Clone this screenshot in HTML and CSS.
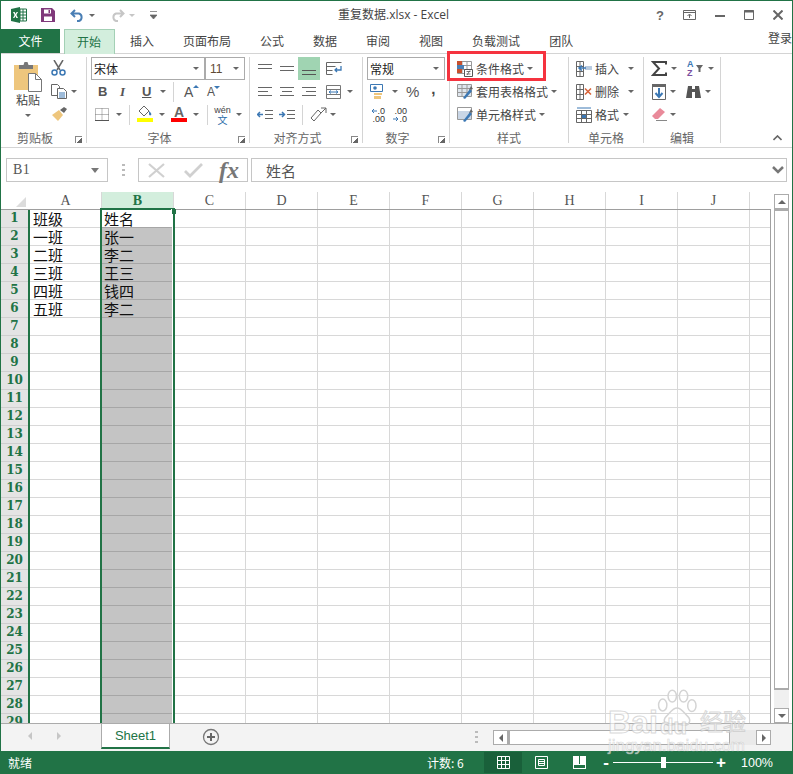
FILE: index.html
```html
<!DOCTYPE html>
<html lang="zh-CN">
<head>
    <meta charset="UTF-8">
    <meta name="viewport" content="width=device-width, initial-scale=1.0">
    <title>重复数据.xlsx - Excel</title>
    <link rel="stylesheet" href="styles.css">
</head>
<body>
<div class="window">

    <!-- Title bar -->
    <div class="titlebar">
        <div class="qat">
            <svg width="16" height="16" viewBox="0 0 16 16"><path d="M0 2 9 0v16L0 14z" fill="#217346"/><path d="M9 2h6.500v12H9z" fill="#fff" stroke="#217346"/><path d="M9 5h7M9 8h7M9 11h7M12 2v12" stroke="#217346"/><path d="M2 5h1.600l1 2 1-2H7L5.400 8 7 11H5.400l-1-2-1 2H2l1.600-3z" fill="#fff"/></svg>
            <svg class="ml14" width="14" height="14" viewBox="0 0 14 14"><path d="M0 0h11l3 3v11H0z" fill="#80397b"/><path d="M3 1.500h7v4H3z" fill="#fff"/><path d="M3 8.500h8V13H3z" fill="#fff"/><path d="M7.500 2h1.500v3H7.500z" fill="#80397b"/></svg>
            <svg class="ml15" width="15" height="13" viewBox="0 0 15 13"><path d="M5 1 1.500 4.500 5 8M2 4.500h7a4 4 0 0 1 0 7.500H7" fill="none" stroke="#4a7fb5" stroke-width="2"/></svg>
            <span class="dd ml4"></span>
            <svg class="ml14" width="15" height="13" viewBox="0 0 15 13"><path d="M10 1l3.500 3.500L10 8M13 4.500H6a4 4 0 0 0 0 7.500h2" fill="none" stroke="#c6c6c6" stroke-width="2"/></svg>
            <span class="dd dd-light ml4"></span>
            <svg class="ml14" width="7" height="9" viewBox="0 0 7 9"><path d="M0 .5h7M0 4h7l-3.500 4z" fill="#666" stroke="#666" stroke-width=".7"/></svg>
        </div>
        <div class="doc-title">重复数据.xlsx - Excel</div>
        <div class="win-btns">
            <span class="help">?</span>
            <svg width="13" height="10" viewBox="0 0 13 10"><path d="M.5.500h12v9H.5z" fill="none" stroke="#666"/><path d="M1 2.500h11" stroke="#666"/><path d="M6.500 8V4.500M4.500 6l2-2 2 2" fill="none" stroke="#666"/></svg>
            <svg width="10" height="10" viewBox="0 0 10 10"><path d="M0 6h10" stroke="#666" stroke-width="2"/></svg>
            <svg width="10" height="10" viewBox="0 0 10 10"><path d="M.5.500h9v9h-9z" fill="none" stroke="#666"/><path d="M0 1.500h10" stroke="#666" stroke-width="2"/></svg>
            <svg width="10" height="10" viewBox="0 0 10 10"><path d="M.5.500l9 9M9.500.500l-9 9" stroke="#666" stroke-width="2"/></svg>
        </div>
    </div>

    <!-- Tabs -->
    <div class="tabs">
        <div class="tab-file">文件</div>
        <div class="tab active">开始</div>
        <div class="tab">插入</div>
        <div class="tab">页面布局</div>
        <div class="tab">公式</div>
        <div class="tab">数据</div>
        <div class="tab">审阅</div>
        <div class="tab">视图</div>
        <div class="tab">负载测试</div>
        <div class="tab">团队</div>
        <div class="login">登录</div>
    </div>

    <!-- Ribbon -->
    <div class="ribbon">
        <div class="group g-clip">
            <div class="clip-body">
                <div class="paste">
                    <svg width="28" height="30" viewBox="0 0 28 30"><path d="M0 3h24v25H0z" fill="#eec67d"/><path d="M5 3h4.500l1-3h3l1 3H19v4H5z" fill="#777"/><path d="M14.500 11.500h7l6 6v12h-13z" fill="#fff" stroke="#777"/><path d="M21.500 11.500v6h6" fill="none" stroke="#777"/></svg>
                    <span class="paste-label">粘贴</span>
                    <span class="dd"></span>
                </div>
                <div class="clip-tools">
                    <svg width="15" height="16" viewBox="0 0 15 16"><path d="M3 0l6 10M12 0 6 10" stroke="#666" stroke-width="1.500"/><circle cx="3.500" cy="12.500" r="2.500" fill="none" stroke="#3c78b4" stroke-width="1.500"/><circle cx="11.500" cy="12.500" r="2.500" fill="none" stroke="#3c78b4" stroke-width="1.500"/></svg>
                    <div class="tool-row">
                        <svg width="16" height="15" viewBox="0 0 16 15"><path d="M.5.500h6l2 2v9h-8z" fill="#fff" stroke="#666"/><path d="M6.500 4.500h6l3 3v7h-9z" fill="#fff" stroke="#666"/><path d="M8 9h6M8 11h6M8 13h6" stroke="#3c78b4"/></svg>
                        <span class="dd"></span>
                    </div>
                    <svg width="16" height="14" viewBox="0 0 16 14"><path d="M9 3l4-3 3 2-3 4z" fill="#666"/><path d="M1 8l7-5 4 5-5 6z" fill="#eec67d"/></svg>
                </div>
            </div>
            <div class="g-label has-launch">剪贴板<i class="launch"></i></div>
        </div>

        <div class="group g-font">
            <div class="rows">
                <div class="row">
                    <div class="combo font-name"><span>宋体</span><span class="dd"></span></div>
                    <div class="combo font-size"><span class="orange">11</span><span class="dd"></span></div>
                </div>
                <div class="row row-f2">
                    <span class="fmt b">B</span>
                    <span class="fmt i">I</span>
                    <span class="fmt u">U</span>
                    <span class="dd ml3"></span>
                    <span class="vsep ml6"></span>
                    <span class="grow ml10">A<i class="up"></i></span>
                    <span class="shrink">A<i class="down"></i></span>
                </div>
                <div class="row row-f3">
                    <svg width="14" height="13" viewBox="0 0 14 13"><path d="M.5.500h13v12H.5zM7 .5v12M.5 6.500h13" fill="none" stroke="#777" stroke-dasharray="1 1"/><path d="M0 12.500h14" stroke="#555"/></svg>
                    <span class="dd ml7"></span>
                    <span class="vsep ml6"></span>
                    <span class="color-btn ml7">
                        <svg width="16" height="12" viewBox="0 0 16 12"><path d="M2 6l5-5 5 5-5 5z" fill="#fff" stroke="#666"/><path d="M12 6c2 2 3 3 2 4s-2 0-2-1z" fill="#3c78b4"/></svg>
                        <i class="bar yellow"></i>
                    </span>
                    <span class="dd ml6"></span>
                    <span class="color-btn fc ml5">A<i class="bar red"></i></span>
                    <span class="dd ml6"></span>
                    <span class="vsep ml7"></span>
                    <span class="wen ml7"><em>wén</em><b>文</b></span>
                    <span class="dd ml6"></span>
                </div>
            </div>
            <div class="g-label has-launch">字体<i class="launch"></i></div>
        </div>

        <div class="group g-align">
            <div class="rows">
                <div class="row">
                    <svg width="14" height="9" viewBox="0 0 14 9"><path d="M0 .5h14M0 4.500h14" stroke="#666"/></svg>
                    <svg class="ml8" width="14" height="9" viewBox="0 0 14 9"><path d="M0 2.500h14M0 6.500h14" stroke="#666"/></svg>
                    <span class="al-on ml4"><svg width="14" height="7" viewBox="0 0 14 7"><path d="M0 1.500h14M0 5.500h14" stroke="#555"/></svg></span>
                    <svg class="ml6" width="16" height="14" viewBox="0 0 16 14"><path d="M.5.500h15M.5 4.500h9M.5 8.500h6M.5 12.500h6M.5.500v12" fill="none" stroke="#666"/><path d="M15 4v4H9M11 6 9 8l2 2" fill="none" stroke="#3c78b4" stroke-width="1.300"/></svg>
                </div>
                <div class="row">
                    <svg width="14" height="9" viewBox="0 0 14 9"><path d="M0 .5h14M0 4.500h10M0 8.500h14" stroke="#666"/></svg>
                    <svg class="ml8" width="14" height="9" viewBox="0 0 14 9"><path d="M0 .5h14M2 4.500h10M0 8.500h14" stroke="#666"/></svg>
                    <svg class="ml8" width="14" height="9" viewBox="0 0 14 9"><path d="M0 .5h14M4 4.500h10M0 8.500h14" stroke="#666"/></svg>
                    <svg class="ml10" width="15" height="14" viewBox="0 0 15 14"><path d="M.5.500h14v13H.5zM.5 4.500h14M.5 9.500h14" fill="none" stroke="#777"/><path d="M3 7h9M3 7l2-1.500M3 7l2 1.500M12 7l-2-1.500M12 7l-2 1.500" stroke="#3c78b4"/></svg>
                    <span class="dd ml6"></span>
                </div>
                <div class="row row-a3">
                    <svg width="16" height="10" viewBox="0 0 16 10"><path d="M8 .5h8M8 4.500h8M8 8.500h8" stroke="#666"/><path d="M6 4.500H1M3 2 .5 4.500 3 7" fill="none" stroke="#3c78b4" stroke-width="1.500"/></svg>
                    <svg class="ml6" width="16" height="10" viewBox="0 0 16 10"><path d="M8 .5h8M8 4.500h8M8 8.500h8" stroke="#666"/><path d="M0 4.500h5M3 2l2.500 2.500L3 7" fill="none" stroke="#3c78b4" stroke-width="1.500"/></svg>
                    <span class="vsep ml7"></span>
                    <svg class="ml7" width="17" height="15" viewBox="0 0 17 15"><path d="M1 11 8 3l3 3-7 8z" fill="#fff" stroke="#666"/><path d="M11 1h5v5M16 1l-5 5" fill="none" stroke="#666"/></svg>
                    <span class="dd ml3"></span>
                </div>
            </div>
            <div class="g-label has-launch">对齐方式<i class="launch"></i></div>
        </div>

        <div class="group g-num">
            <div class="rows">
                <div class="row">
                    <div class="combo num-fmt"><span>常规</span><span class="dd"></span></div>
                </div>
                <div class="row row-n2">
                    <svg width="13" height="15" viewBox="0 0 13 15"><path d="M.5.500h12v7H.5z" fill="#fff" stroke="#3c78b4"/><circle cx="5" cy="4" r="1.800" fill="#3c78b4"/><path d="M4 9h8v2H4zM4 12h7v3H4z" fill="#eec67d"/></svg>
                    <span class="dd ml9"></span>
                    <span class="pct ml7">%</span>
                    <span class="comma">,</span>
                </div>
                <div class="row row-n3">
                    <span class="dec"><i><svg width="6" height="6" viewBox="0 0 6 6"><path d="M6 3H1M3 1 1 3l2 2" fill="none" stroke="#3c78b4"/></svg>.0</i><i>.00</i></span>
                    <span class="dec ml7"><i>.00</i><i><svg width="6" height="6" viewBox="0 0 6 6"><path d="M0 3h5M3 1l2 2-2 2" fill="none" stroke="#3c78b4"/></svg>.0</i></span>
                </div>
            </div>
            <div class="g-label has-launch">数字<i class="launch"></i></div>
        </div>

        <div class="group g-style">
            <div class="rows">
                <div class="row cmd highlighted">
                    <svg width="16" height="16" viewBox="0 0 16 16"><path d="M.5.500h14v12H.5zM5 .5v12M10 .5v12M.5 4.500h14M.5 8.500h14" fill="#fff" stroke="#999"/><path d="M0 0h5v4H0z" fill="#c8502d"/><path d="M0 4h7v4H0z" fill="#4a7fb5"/><path d="M0 8h5v4H0z" fill="#c8502d"/><path d="M7.500 8.500h8v7h-8z" fill="#fff" stroke="#555"/><path d="M9.500 10.500h4M9.500 13h4M10 14l3-4.500" fill="none" stroke="#555" stroke-width=".8"/></svg>
                    <span>条件格式</span><span class="dd"></span>
                </div>
                <div class="row cmd">
                    <svg width="16" height="16" viewBox="0 0 16 16"><path d="M.5.500h14v12H.5zM5 .5v12M10 .5v12M.5 4.500h14M.5 8.500h14" fill="#dfe6ee" stroke="#999"/><path d="M6 14l7-9 2 2-7 8z" fill="#3c78b4"/><path d="M12 6l2-4 2 3z" fill="#666"/></svg>
                    <span>套用表格格式</span><span class="dd"></span>
                </div>
                <div class="row cmd">
                    <svg width="16" height="16" viewBox="0 0 16 16"><path d="M.5.500h14v12H.5z" fill="#c9d6e6" stroke="#999"/><path d="M1 1h13v3H1z" fill="#fff"/><path d="M6 14l7-9 2 2-7 8z" fill="#3c78b4"/><path d="M12 6l2-4 2 3z" fill="#666"/></svg>
                    <span>单元格样式</span><span class="dd"></span>
                </div>
            </div>
            <div class="g-label">样式</div>
        </div>

        <div class="group g-cells">
            <div class="rows">
                <div class="row cmd">
                    <svg width="16" height="16" viewBox="0 0 16 16"><path d="M.5.500h7v15h-7zM.5 5.500h7M.5 10.500h7M4 .5v15" fill="#fff" stroke="#666"/><path d="M9 5h7v4H9z" fill="#b8cbe0"/><path d="M10 7H3M6 4.500 3 7l3 2.500" fill="none" stroke="#3c78b4" stroke-width="1.500"/></svg>
                    <span class="c-text">插入</span><span class="dd ml5"></span>
                </div>
                <div class="row cmd">
                    <svg width="16" height="16" viewBox="0 0 16 16"><path d="M.5.500h7v15h-7zM.5 5.500h7M.5 10.500h7M4 .5v15" fill="#fff" stroke="#666"/><path d="M9 4.500l6 6M15 4.500l-6 6" stroke="#d9643a" stroke-width="1.600"/></svg>
                    <span class="c-text">删除</span><span class="dd ml5"></span>
                </div>
                <div class="row cmd">
                    <svg width="16" height="16" viewBox="0 0 16 16"><path d="M.5 3.500h15v12H.5zM5.500 3.500v12M10.500 3.500v12M.5 7.500h15M.5 11.500h15" fill="#fff" stroke="#666"/><path d="M6 8h4v3H6z" fill="#3c78b4"/><path d="M1 1h14" stroke="#3c78b4"/></svg>
                    <span class="c-text">格式</span><span class="dd"></span>
                </div>
            </div>
            <div class="g-label">单元格</div>
        </div>

        <div class="group g-edit">
            <div class="rows">
                <div class="row">
                    <svg class="sigma" width="16" height="15" viewBox="0 0 16 15"><path d="M15 3.500V1H2l6 6.500L2 14h13v-2.500" fill="none" stroke="#444" stroke-width="2"/></svg>
                    <span class="dd ml4"></span>
                    <span class="az ml9"><i class="a">A</i><i class="z">Z</i></span>
                    <svg class="ml1" width="7" height="7" viewBox="0 0 7 7"><path d="M0 0h7L4.500 3.500V7h-2V3.500z" fill="#666"/></svg>
                    <span class="dd ml5"></span>
                </div>
                <div class="row">
                    <svg width="14" height="16" viewBox="0 0 14 16"><path d="M.5.500h13v15H.5z" fill="#fff" stroke="#666"/><path d="M0 0h14v3H0z" fill="#666"/><path d="M7 4v9M3.500 9 7 13l3.500-4" fill="none" stroke="#3c78b4" stroke-width="2"/></svg>
                    <span class="dd ml4"></span>
                    <svg class="ml9" width="15" height="14" viewBox="0 0 15 14"><path d="M2 1h4v3h3V1h4l2 12H9V7H6v6H0z" fill="#555"/></svg>
                    <span class="dd ml4"></span>
                </div>
                <div class="row">
                    <svg width="15" height="13" viewBox="0 0 15 13"><path d="M0 8l8-8 5 4-7 7H3z" fill="#e98a9a"/><path d="M4 12.500h11" stroke="#888"/></svg>
                    <span class="dd ml3"></span>
                </div>
            </div>
            <div class="g-label">编辑</div>
        </div>

        <svg class="collapse" width="9" height="6" viewBox="0 0 9 6"><path d="M.5 5l4-4 4 4" fill="none" stroke="#666" stroke-width="1.600"/></svg>
    </div>

    <!-- Formula bar -->
    <div class="formula-bar">
        <div class="name-box"><span>B1</span><i class="dd dd-big"></i></div>
        <div class="grip"></div>
        <div class="fx-box">
            <svg width="17" height="15" viewBox="0 0 17 15"><path d="M1 1l15 13M16 1 1 14" stroke="#d0d0d0" stroke-width="2.200"/></svg>
            <svg class="ml19" width="19" height="15" viewBox="0 0 19 15"><path d="M1 8l5 5L18 1" fill="none" stroke="#d0d0d0" stroke-width="2.800"/></svg>
            <span class="fx">fx</span>
        </div>
        <div class="f-input"><span>姓名</span><svg width="12" height="8" viewBox="0 0 12 8"><path d="M1 1l5 5 5-5" fill="none" stroke="#777" stroke-width="2.500"/></svg></div>
    </div>

    <!-- Sheet -->
    <div class="sheet">
        <div class="sheet-main">
            <div class="col-heads">
                <div class="corner"><i></i></div>
                <div class="ch">A</div>
                <div class="ch ch-on">B</div>
                <div class="ch">C</div>
                <div class="ch">D</div>
                <div class="ch">E</div>
                <div class="ch">F</div>
                <div class="ch">G</div>
                <div class="ch">H</div>
                <div class="ch">I</div>
                <div class="ch">J</div>
                <div class="ch ch-last"></div>
            </div>
            <div class="grid">
                <div class="row-heads">
                    <div>1</div><div>2</div><div>3</div><div>4</div><div>5</div><div>6</div><div>7</div><div>8</div><div>9</div><div>10</div>
                    <div>11</div><div>12</div><div>13</div><div>14</div><div>15</div><div>16</div><div>17</div><div>18</div><div>19</div><div>20</div>
                    <div>21</div><div>22</div><div>23</div><div>24</div><div>25</div><div>26</div><div>27</div><div>28</div><div>29</div>
                </div>
                <div class="cells">
                    <div class="col col-a">
                        <div class="cell">班级</div>
                        <div class="cell">一班</div>
                        <div class="cell">二班</div>
                        <div class="cell">三班</div>
                        <div class="cell">四班</div>
                        <div class="cell">五班</div>
                    </div>
                    <div class="col col-b">
                        <div class="cell cell-active">姓名</div>
                        <div class="cell">张一</div>
                        <div class="cell">李二</div>
                        <div class="cell">王三</div>
                        <div class="cell">钱四</div>
                        <div class="cell">李二</div>
                        <i class="handle"></i>
                    </div>
                </div>
            </div>
        </div>
        <div class="v-scroll">
            <div class="sb-btn"><i class="tri tri-up"></i></div>
            <div class="sb-thumb"></div>
            <div class="sb-track"></div>
            <div class="sb-btn"><i class="tri tri-down"></i></div>
        </div>
    </div>

    <!-- Sheet tabs -->
    <div class="sheet-tabs">
        <div class="nav-arrows"><i class="tri tri-left light"></i><i class="tri tri-right light"></i></div>
        <div class="sheet-tab">Sheet1</div>
        <div class="add-sheet">
            <svg width="18" height="18" viewBox="0 0 18 18"><circle cx="9" cy="9" r="7.500" fill="none" stroke="#777" stroke-width="1.300"/><path d="M5 9h8M9 5v8" stroke="#666" stroke-width="2"/></svg>
        </div>
        <div class="h-grip"></div>
        <div class="h-scroll">
            <div class="sb-btn"><i class="tri tri-left"></i></div>
            <div class="h-thumb"></div>
            <div class="h-rest"></div>
            <div class="sb-btn"><i class="tri tri-right"></i></div>
        </div>
    </div>

    <!-- Status bar -->
    <div class="statusbar">
        <span class="ready">就绪</span>
        <span class="count">计数: 6</span>
        <div class="view-btn on"><svg width="13" height="13" viewBox="0 0 13 13"><path d="M.5.500h12v12H.5zM4.500.5v12M8.500.5v12M.5 4.500h12M.5 8.500h12" fill="none" stroke="#fff"/></svg></div>
        <div class="view-btn"><svg width="13" height="13" viewBox="0 0 13 13"><path d="M.5.500h12v12H.5z" fill="none" stroke="#fff"/><path d="M3.500 3.500h6v6h-6zM4 5.500h5M4 7.500h5" fill="none" stroke="#fff"/></svg></div>
        <div class="view-btn"><svg width="13" height="13" viewBox="0 0 13 13"><path d="M0 0h13v13H0z" fill="#fff"/><path d="M6 0h1v8H6z" fill="#217346"/><path d="M1 9h11v3H1z" fill="#217346"/></svg></div>
        <div class="zoom">
            <span class="z-btn">-</span>
            <div class="z-track"><i></i></div>
            <span class="z-btn">+</span>
        </div>
        <span class="pct-zoom">100%</span>
    </div>

    <!-- Watermark -->
    <div class="watermark">
        <svg class="paw" width="44" height="46" viewBox="0 0 74 74" fill="rgba(255,255,255,.4)" stroke="#d4d4d4" stroke-width="2.500"><ellipse cx="13" cy="27" rx="7" ry="10"/><ellipse cx="29" cy="12" rx="7" ry="10"/><ellipse cx="48" cy="12" rx="7" ry="10"/><ellipse cx="62" cy="28" rx="7" ry="10"/><path d="M37 32c8 0 12 9 18 14 7 7 2 16-7 15-4-1-7-2-11-2s-7 1-11 2c-9 1-14-8-7-15 6-5 10-14 18-14z"/></svg>
        <span class="wm-bai">Bai</span>
        <span class="wm-du">du</span>
        <span class="wm-cn">经验</span>
        <span class="wm-url">jingyan.baidu.com</span>
    </div>
</div>
</body>
</html>
```

FILE: styles.css
```css
/* Base */
*, *::after {
    box-sizing: border-box;
}

html, body {
    margin: 0;
    padding: 0;
    height: 100%;
    overflow: hidden;
}

body {
    font-family: "Noto Sans CJK SC", "Liberation Sans", sans-serif;
    font-size: 12px;
    color: #444;
    background: #fff;
}

i, em {
    font-style: normal;
}

.window {
    position: relative;
    width: 793px;
    height: 774px;
    border: 1px solid #217346;
    border-bottom: none;
    overflow: hidden;
    display: flex;
    flex-direction: column;
    background: #fff;
}

svg {
    flex: none;
    display: block;
}

/* Small spacing helpers for the ribbon rows */
.ml1 { margin-left: 1px; }
.ml3 { margin-left: 3px; }
.ml4 { margin-left: 4px; }
.ml5 { margin-left: 5px; }
.ml6 { margin-left: 6px; }
.ml7 { margin-left: 7px; }
.ml8 { margin-left: 8px; }
.ml9 { margin-left: 9px; }
.ml10 { margin-left: 10px; }
.ml14 { margin-left: 14px; }
.ml15 { margin-left: 15px; }
.ml19 { margin-left: 19px; }

/* Dropdown arrow */
.dd {
    flex: none;
    display: inline-block;
    width: 6px;
    height: 0;
    margin-right: 1px;
    border-left: 3px solid transparent;
    border-right: 3px solid transparent;
    border-top: 3.5px solid #666;
}

.dd-light {
    border-top-color: #c6c6c6;
}

/* Title bar */
.titlebar {
    height: 28px;
    display: flex;
    align-items: center;
    flex: none;
}

.qat {
    width: 337px;
    display: flex;
    align-items: center;
    padding-left: 10px;
}

.doc-title {
    width: 130px;
    margin-top: -2px;
    white-space: nowrap;
    font-family: "Open Sans", "Noto Sans CJK SC", sans-serif;
    font-size: 12px;
    color: #444;
}

.win-btns {
    margin-left: auto;
    display: flex;
    align-items: center;
    gap: 19px;
    padding-right: 9px;
}

.help {
    font-family: "Liberation Sans", sans-serif;
    font-weight: bold;
    font-size: 13px;
    color: #666;
}

/* Tabs */
.tabs {
    height: 25px;
    display: flex;
    align-items: stretch;
    flex: none;
    position: relative;
    border-bottom: 1px solid #d4d4d4;
}

.tab-file {
    width: 59px;
    height: 24px;
    line-height: 24px;
    text-align: center;
    color: #fff;
    background: #217346;
    margin-right: 4px;
}

.tab {
    padding: 0 14px;
    margin-right: 1px;
    line-height: 24px;
    white-space: nowrap;
}

.tab.active {
    color: #217346;
    height: 25px;
    padding: 0 13px 0 12px;
    background: #d3eedd;
    border: 1px solid #a3d0b5;
    border-bottom: none;
}

.login {
    position: absolute;
    right: 0;
    top: -1px;
    line-height: 20px;
}

/* Ribbon */
.ribbon {
    position: relative;
    height: 94px;
    flex: none;
    display: flex;
    border-bottom: 1px solid #d4d4d4;
    padding-top: 3px;
    padding-bottom: 4px;
}

.group {
    position: relative;
    display: flex;
    flex-direction: column;
    border-right: 1px solid #d4d4d4;
    flex: none;
}

.rows {
    flex: 1;
    display: flex;
    flex-direction: column;
}

.row {
    height: 23px;
    display: flex;
    align-items: center;
    flex: none;
}

.g-label {
    position: relative;
    height: 16px;
    margin-bottom: -3px;
    line-height: 16px;
    text-align: center;
    color: #666;
    flex: none;
}

.has-launch {
    padding-right: 17px;
}

.launch {
    position: absolute;
    right: 4px;
    bottom: 3px;
    width: 7px;
    height: 7px;
    border-left: 1px solid #888;
    border-top: 1px solid #888;
    background: linear-gradient(135deg, transparent 55%, #666 55%);
}

.vsep {
    flex: none;
    width: 1px;
    height: 20px;
    background: #d4d4d4;
}

.combo {
    height: 23px;
    display: flex;
    align-items: center;
    justify-content: space-between;
    border: 1px solid #ababab;
    padding: 0 4px 0 2px;
    color: #222;
    font-size: 12px;
}

.orange {
    color: #5f4a34;
    font-family: "Liberation Sans", sans-serif;
    margin-left: 2px;
}

/* Clipboard group */
.g-clip {
    width: 86px;
}

.clip-body {
    flex: 1;
    display: flex;
    padding-left: 9px;
}

.paste {
    width: 36px;
    display: flex;
    flex-direction: column;
    align-items: center;
    padding-top: 5px;
}

.paste-label {
    line-height: 16px;
    color: #444;
}

.paste .dd {
    margin-top: 6px;
}

.clip-tools {
    margin-left: 5px;
    padding-top: 3px;
    display: flex;
    flex-direction: column;
    gap: 8px;
}

.tool-row {
    display: flex;
    align-items: center;
    gap: 4px;
}

/* Font group */
.g-font {
    width: 163px;
}

.g-font .rows {
    padding-left: 4px;
}

.font-name {
    width: 114px;
}

.font-size {
    width: 40px;
}

.row-f2 {
    padding-left: 7px;
}

.fmt {
    width: 22px;
    font-family: "Liberation Sans", sans-serif;
    font-size: 13px;
    color: #555;
}

.fmt.b { font-weight: bold; }
.fmt.i { font-family: "Liberation Serif", serif; font-style: italic; font-weight: bold; }
.fmt.u { width: 15px; font-weight: bold; text-decoration: underline; }

.grow, .shrink {
    position: relative;
    font-family: "Liberation Sans", sans-serif;
    color: #555;
}

.grow { font-size: 14px; width: 23px; }
.shrink { font-size: 12px; }

.up, .down {
    position: absolute;
    top: 1px;
    width: 0;
    height: 0;
    border-left: 3px solid transparent;
    border-right: 3px solid transparent;
}

.up { left: 9px; border-bottom: 3px solid #3c78b4; }
.down { left: 7px; border-top: 3px solid #3c78b4; }

.row-f3 {
    padding-left: 4px;
}

.color-btn {
    position: relative;
    width: 16px;
    height: 17px;
    margin-top: -2px;
    display: block;
}

.bar {
    position: absolute;
    left: 0;
    right: 0;
    bottom: 0;
    height: 4px;
}

.yellow { background: #ff0; }
.red { background: #f00; }

.fc {
    font-family: "Liberation Sans", sans-serif;
    font-size: 14px;
    font-weight: bold;
    line-height: 14px;
    text-align: center;
    color: #666;
}

.wen {
    width: 15px;
    display: flex;
    flex-direction: column;
    align-items: center;
    line-height: 9px;
    font-size: 9px;
    white-space: nowrap;
}

.wen em {
    font-family: "Liberation Sans", sans-serif;
}

.wen b {
    font-weight: normal;
    color: #2b6ca8;
    font-size: 10px;
}

/* Alignment group */
.g-align {
    width: 113px;
}

.g-align .rows {
    padding-left: 8px;
}

.al-on {
    width: 22px;
    height: 23px;
    background: #a0d4b2;
    display: flex;
    align-items: flex-end;
    justify-content: center;
    padding-bottom: 4px;
}

.row-a3 {
    margin-left: -1px;
}

/* Number group */
.g-num {
    width: 87px;
}

.g-num .rows {
    padding-left: 4px;
}

.num-fmt {
    width: 78px;
}

.row-n2 {
    padding-left: 3px;
}

.pct {
    font-family: "Liberation Sans", sans-serif;
    font-size: 15px;
    color: #555;
}

.comma {
    font-family: "Liberation Sans", sans-serif;
    font-weight: bold;
    font-size: 15px;
    margin: -6px 0 0 12px;
}

.row-n3 {
    padding-left: 3px;
}

.dec {
    width: 15px;
    display: flex;
    flex-direction: column;
    align-items: flex-end;
    font-family: "Liberation Sans", sans-serif;
    font-size: 9px;
    line-height: 8px;
    color: #333;
}

.dec i {
    display: flex;
    align-items: center;
}

/* Styles group */
.g-style {
    width: 119px;
}

.g-style .rows {
    padding-left: 7px;
}

.cmd {
    gap: 3px;
    white-space: nowrap;
    color: #444;
}

.highlighted::after {
    content: "";
    position: absolute;
    left: -3px;
    top: -6px;
    width: 99px;
    height: 30px;
    border: 3px solid #f5333f;
}

/* Cells group */
.g-cells {
    width: 75px;
}

.g-cells .rows {
    padding-left: 7px;
}

.c-text {
    width: 25px;
}

/* Editing group */
.g-edit {
    width: 77px;
}

.g-edit .rows {
    padding-left: 8px;
}

.sigma {
    margin-left: -1px;
}

.az {
    width: 8px;
    display: flex;
    flex-direction: column;
    font-family: "Liberation Sans", sans-serif;
    font-size: 9px;
    line-height: 9px;
    font-weight: bold;
}

.a { color: #3c78b4; }
.z { color: #7a4fa0; }

.collapse {
    position: absolute;
    right: 10px;
    bottom: 6px;
}

/* Formula bar */
.formula-bar {
    height: 24px;
    margin-top: 10px;
    padding-left: 5px;
    display: flex;
    flex: none;
}

.name-box {
    width: 102px;
    border: 1px solid #c6c6c6;
    display: flex;
    align-items: center;
    justify-content: space-between;
    padding: 0 7px 0 6px;
    font-family: "Liberation Serif", serif;
    font-size: 14px;
    letter-spacing: 0.5px;
    color: #555;
}

.dd-big {
    width: 8px;
    border-left-width: 4px;
    border-right-width: 4px;
    border-top-width: 5px;
    border-top-color: #777;
}

.grip {
    width: 3px;
    height: 12px;
    margin: 6px 13px 0 14px;
    background: repeating-linear-gradient(#bbb 0 2px, transparent 2px 5px);
}

.fx-box {
    width: 110px;
    border: 1px solid #c6c6c6;
    display: flex;
    align-items: center;
    padding-left: 9px;
}

.fx {
    margin-left: 16px;
    font-family: "Liberation Serif", serif;
    font-style: italic;
    font-weight: bold;
    font-size: 24px;
    line-height: 22px;
    color: #777;
}

.f-input {
    width: 536px;
    margin-left: 3px;
    border: 1px solid #c6c6c6;
    display: flex;
    align-items: center;
    justify-content: space-between;
    padding: 0 2px 0 14px;
    font-size: 15px;
    color: #555;
}

/* Sheet */
.sheet {
    height: 531px;
    margin-top: 10px;
    display: flex;
    flex: none;
}

.sheet-main {
    width: 770px;
    flex: none;
    display: flex;
    flex-direction: column;
    min-height: 0;
}

.col-heads {
    height: 18px;
    display: flex;
    flex: none;
    border-bottom: 1px solid #9e9e9e;
    font-family: "Liberation Serif", serif;
    font-size: 14px;
    color: #555;
}

.corner {
    width: 29px;
    position: relative;
}

.corner i {
    position: absolute;
    right: 4px;
    bottom: 2px;
    width: 0;
    height: 0;
    border-left: 10px solid transparent;
    border-bottom: 10px solid #dcdcdc;
}

.ch {
    width: 72px;
    border-right: 1px solid #d8d8d8;
    text-align: center;
    line-height: 18px;
}

.ch-on {
    background: #d3eedd;
    color: #217346;
    font-weight: bold;
}

.ch-last {
    width: 21px;
    border-right: none;
}

.grid {
    flex: 1;
    display: flex;
    min-height: 0;
}

.row-heads {
    width: 29px;
    flex: none;
    overflow: hidden;
    background: #e4e4e4;
    border-right: 2px solid #217346;
}

.row-heads div {
    height: 18px;
    line-height: 17px;
    border-bottom: 1px solid #cfcfcf;
    text-align: center;
    font-family: "DejaVu Serif", serif;
    font-weight: bold;
    font-size: 12px;
    color: #217346;
}

.cells {
    flex: 1;
    display: flex;
    border-right: 1px solid #a0a0a0;
    background-image:
        repeating-linear-gradient(to right, transparent 0 71px, #d8d8d8 71px 72px),
        repeating-linear-gradient(to bottom, transparent 0 17px, #d8d8d8 17px 18px);
}

.col {
    width: 72px;
    flex: none;
}

.col-a {
    width: 70px;
}

.cell {
    height: 18px;
    line-height: 18px;
    padding-left: 3px;
    font-size: 15px;
    color: #111;
    white-space: nowrap;
}

.col-b {
    position: relative;
    width: 75px;
    border-left: 2px solid #217346;
    border-right: 2px solid #217346;
    border-top: 2px solid #217346;
    margin-top: -2px;
    background-color: #c4c4c4;
    background-image: repeating-linear-gradient(to bottom, transparent 0 17px, #a6a6a6 17px 18px);
    box-shadow: inset -1px 0 0 #fff;
}

.col-b .cell {
    padding-left: 2px;
}

.cell-active {
    height: 17px;
    margin-bottom: 1px;
    background: #fff;
    position: relative;
}

.handle {
    position: absolute;
    right: -3px;
    top: -1px;
    width: 5px;
    height: 5px;
    background: #217346;
    border-left: 1px solid #fff;
}

/* Scrollbars */
.v-scroll {
    width: 15px;
    margin: 2px 0 0 3px;
    display: flex;
    flex-direction: column;
    height: 529px;
}

.sb-btn {
    width: 15px;
    height: 15px;
    flex: none;
    border: 1px solid #ababab;
    background: #fff;
    display: flex;
    align-items: center;
    justify-content: center;
}

.sb-thumb {
    height: 481px;
    flex: none;
    border: 1px solid #ababab;
    border-top-width: 2px;
    border-bottom-width: 2px;
    background: #fff;
}

.sb-track {
    flex: 1;
    background: #f0f0f0;
}

.tri {
    width: 0;
    height: 0;
    display: block;
    border: 4px solid transparent;
}

.tri-up { border-bottom-color: #666; border-top-width: 0; }
.tri-down { border-top-color: #666; border-bottom-width: 0; }
.tri-left { border-right-color: #666; border-left-width: 0; }
.tri-right { border-left-color: #666; border-right-width: 0; }
.tri-left.light { border-right-color: #c6c6c6; }
.tri-right.light { border-left-color: #c6c6c6; }

/* Sheet tabs */
.sheet-tabs {
    height: 28px;
    flex: none;
    display: flex;
    background: #f3f3f3;
    border-top: 1px solid #ababab;
    position: relative;
}

.nav-arrows {
    width: 100px;
    display: flex;
    align-items: center;
    padding: 0 0 4px 27px;
    gap: 25px;
}

.sheet-tab {
    width: 69px;
    height: 25px;
    background: #fff;
    border: 1px solid #ababab;
    border-top: none;
    border-bottom: 2px solid #217346;
    text-align: center;
    line-height: 23px;
    font-family: "Liberation Sans", sans-serif;
    font-size: 13px;
    color: #217346;
}

.add-sheet {
    margin-left: 32px;
    padding-top: 4px;
}

.h-grip {
    width: 3px;
    height: 12px;
    margin: 7px 0 0 255px;
    background: repeating-linear-gradient(#bbb 0 2px, transparent 2px 5px);
}

.h-scroll {
    width: 278px;
    height: 15px;
    margin: 6px 0 0 15px;
    display: flex;
}

.h-thumb {
    width: 222px;
    border: 1px solid #ababab;
    border-left-width: 2px;
    background: #fff;
}

.h-rest {
    flex: 1;
    background: #eaeaea;
}

/* Status bar */
.statusbar {
    height: 23px;
    flex: none;
    display: flex;
    align-items: center;
    background: #217346;
    color: #fff;
    padding-left: 7px;
    position: relative;
}

.ready {
    width: 419px;
}

.count {
    width: 57px;
}

.view-btn {
    width: 38px;
    height: 21px;
    display: flex;
    align-items: center;
    justify-content: center;
}

.view-btn.on {
    background: #19603a;
}

.zoom {
    display: flex;
    align-items: center;
    margin-left: 3px;
}

.z-btn {
    width: 10px;
    font-family: "Liberation Sans", sans-serif;
    font-size: 17px;
    font-weight: bold;
    line-height: 16px;
    text-align: center;
}

.z-track {
    position: relative;
    width: 100px;
    height: 1px;
    margin: 0 3px 0 2px;
    background: #fff;
}

.z-track i {
    position: absolute;
    left: 48px;
    top: -5px;
    width: 5px;
    height: 11px;
    background: #fff;
}

.pct-zoom {
    margin-left: 15px;
    font-family: "Liberation Sans", sans-serif;
    font-size: 12.5px;
}

/* Watermark */
.watermark {
    position: absolute;
    left: 600px;
    top: 680px;
    width: 170px;
    height: 94px;
    color: rgba(255, 255, 255, 0.6);
    font-family: "Liberation Sans", sans-serif;
    pointer-events: none;
}

.paw {
    position: absolute;
    left: 54px;
    top: 7px;
}

.wm-bai, .wm-du, .wm-cn, .wm-url {
    position: absolute;
    -webkit-text-stroke: 1px rgba(190, 190, 190, 0.6);
    white-space: nowrap;
}

.wm-bai {
    left: 7px;
    top: 23px;
    font-size: 32px;
    font-weight: bold;
}

.wm-du {
    left: 59px;
    top: 33px;
    font-size: 22px;
    font-weight: bold;
}

.wm-cn {
    left: 99px;
    top: 22px;
    font-size: 23px;
    font-family: "Noto Sans CJK SC", sans-serif;
}

.wm-url {
    left: 7px;
    top: 55px;
    font-size: 17px;
    -webkit-text-stroke: 0.6px rgba(190, 190, 190, 0.6);
}
```
